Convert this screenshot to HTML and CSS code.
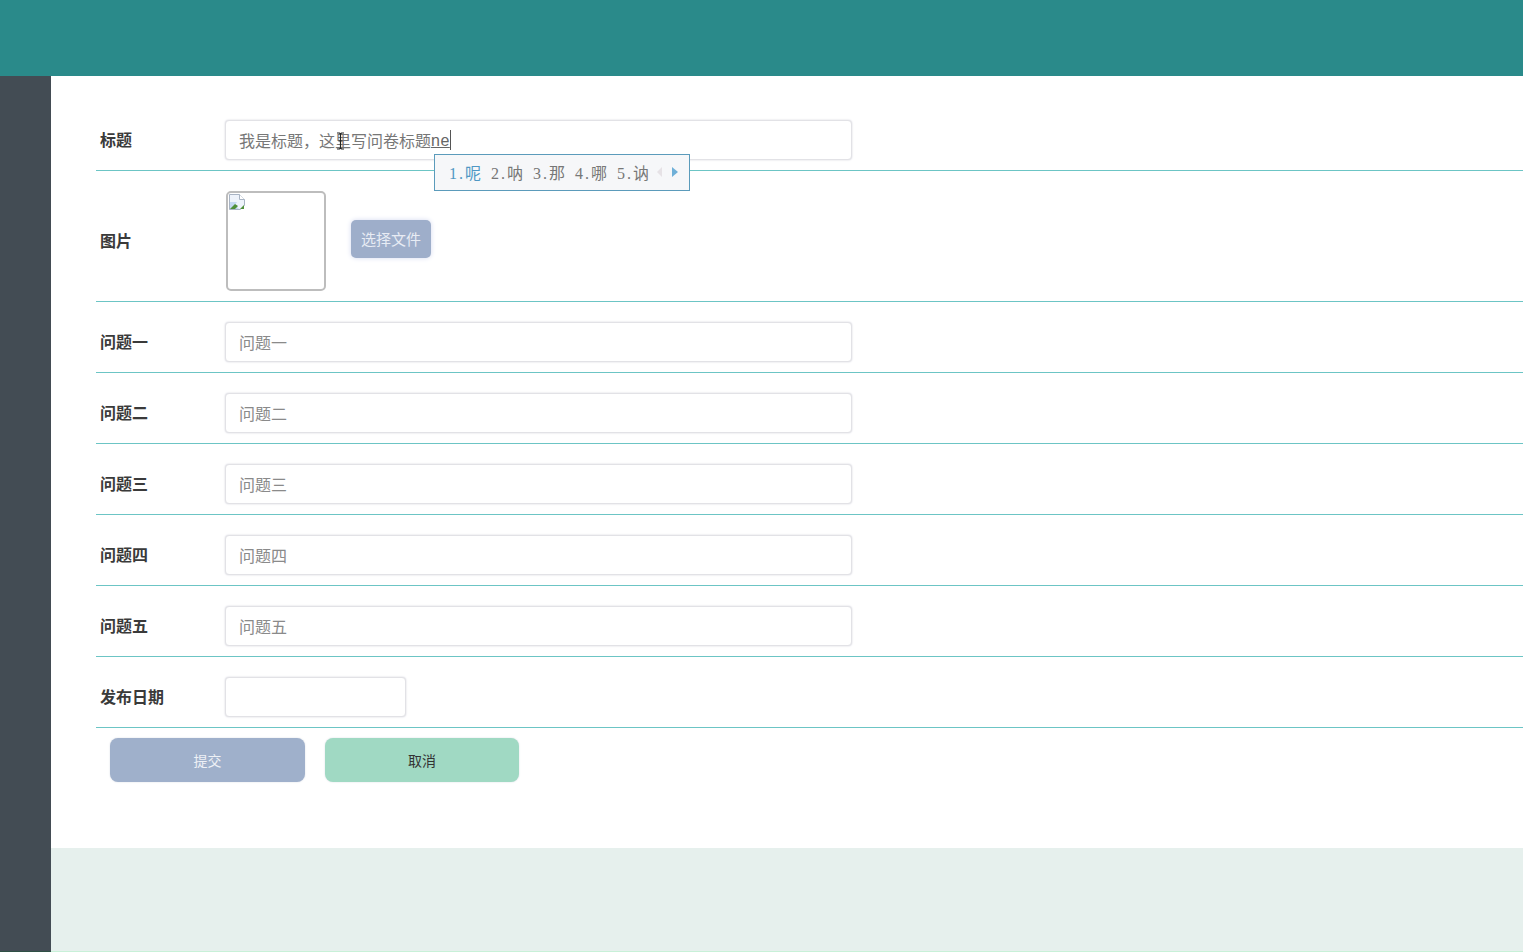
FILE: index.html
```html
<!DOCTYPE html>
<html lang="zh-CN">
<head>
    <meta charset="UTF-8">
    <meta name="viewport" content="width=device-width, initial-scale=1.0">
    <title>问卷</title>
    <link rel="stylesheet" href="styles.css">
</head>
<body>

    <div class="top-bar"></div>

    <div class="page">
        <div class="side-bar"></div>

        <div class="content">
            <form class="main-form">
                <div class="form-row">
                    <label class="row-label">标题</label>
                    <div class="title-field">
                        <span>我是标题，这里写问卷标题</span><span class="composing">ne</span><span class="caret"></span>
                        <svg class="ibeam" width="9" height="18" viewBox="0 0 9 18">
                            <path d="M1 1h2.5l1 1 1-1H8M4.500 2v14M1 17h2.5l1-1 1 1H8M2.500 9h4" fill="none" stroke="#222" stroke-width="1.2"/>
                        </svg>
                    </div>
                </div>

                <div class="form-row">
                    <label class="row-label">图片</label>
                    <div class="img-box">
                        <!-- broken image icon -->
                        <svg width="16" height="16" viewBox="0 0 16 16">
                            <path d="M.5.5h10l5 5v6l-4 4H.5z" fill="#eef3fb" stroke="#a9b4c4"/>
                            <path d="M10.500.5v5h5" fill="#fff" stroke="#a9b4c4"/>
                            <path d="M1 8h7l-2 3 4 4H1z" fill="#c5d8f3"/>
                            <path d="M1 15l5-5 3 2-3 3z" fill="#4f8f3a"/>
                            <path d="M11 15l4-4v4z" fill="#4f8f3a"/>
                        </svg>
                    </div>
                    <button type="button" class="file-btn">选择文件</button>
                </div>

                <div class="form-row">
                    <label class="row-label">问题一</label>
                    <input class="text-input" type="text" placeholder="问题一">
                </div>
                <div class="form-row">
                    <label class="row-label">问题二</label>
                    <input class="text-input" type="text" placeholder="问题二">
                </div>
                <div class="form-row">
                    <label class="row-label">问题三</label>
                    <input class="text-input" type="text" placeholder="问题三">
                </div>
                <div class="form-row">
                    <label class="row-label">问题四</label>
                    <input class="text-input" type="text" placeholder="问题四">
                </div>
                <div class="form-row">
                    <label class="row-label">问题五</label>
                    <input class="text-input" type="text" placeholder="问题五">
                </div>
                <div class="form-row">
                    <label class="row-label">发布日期</label>
                    <input class="text-input date-input" type="text">
                </div>

                <div class="btn-row">
                    <button type="button" class="big-btn submit-btn">提交</button>
                    <button type="button" class="big-btn cancel-btn">取消</button>
                </div>
            </form>

            <div class="footer"></div>
        </div>
    </div>

    <!-- input method popup -->
    <div class="ime-box">
        <span class="ime-item ime-active">1.呢</span>
        <span class="ime-item">2.呐</span>
        <span class="ime-item">3.那</span>
        <span class="ime-item">4.哪</span>
        <span class="ime-item">5.讷</span>
        <span class="ime-prev"></span>
        <span class="ime-next"></span>
    </div>

</body>
</html>
```

FILE: styles.css
```css
* {
    box-sizing: border-box;
}

body {
    margin: 0;
    height: 952px;
    overflow: hidden;
    font-family: "Liberation Sans", "Noto Sans CJK SC", sans-serif;
    color: #333;
    background: #fff;
}

.top-bar {
    height: 76px;
    background: #2a8a8a;
}

.page {
    display: flex;
    height: 876px;
}

.side-bar {
    width: 51px;
    background: #434c54;
    border-bottom: 1px solid #2f4f45;
}

.content {
    flex: 1;
    display: flex;
    flex-direction: column;
}

.main-form {
    height: 772px;
    padding: 24px 0 0 45px;
}

.form-row {
    display: flex;
    align-items: center;
    padding: 20px 0 10px 4px;
    border-bottom: 1px solid #6cc5c5;
}

.row-label {
    width: 125px;
    margin-bottom: 2px;
    font-size: 16px;
    font-weight: bold;
    color: #3a3a3a;
}

.text-input,
.title-field {
    width: 627px;
    height: 40px;
    padding: 3px 13px 0;
    font-family: inherit;
    font-size: 16px;
    color: #777;
    background: #fff;
    border: 1px solid #e2e2e6;
    border-radius: 4px;
    box-shadow: 0 0 2px #d0d0da;
}

.text-input::placeholder {
    color: #8a8a8a;
    opacity: 1;
}

.date-input {
    width: 181px;
}

.title-field {
    position: relative;
    display: flex;
    align-items: center;
    padding-top: 0;
}

.composing {
    padding-top: 1px;
    color: #666;
    text-decoration: underline;
    letter-spacing: 0.5px;
}

.caret {
    width: 1px;
    height: 20px;
    background: #555;
}

.ibeam {
    position: absolute;
    left: 110px;
    top: 11px;
}

.img-box {
    width: 100px;
    height: 100px;
    margin-left: 1px;
    padding: 1px;
    border: 2px solid #bdbdbd;
    border-radius: 5px;
    line-height: 0;
}

.file-btn {
    width: 80px;
    height: 38px;
    margin: 0 0 4px 25px;
    padding: 0 0 2px;
    font-family: inherit;
    font-size: 15px;
    color: #e8ecf4;
    background: #9eaeca;
    border: none;
    border-radius: 5px;
    box-shadow: 0 0 5px #d5daf0;
}

.btn-row {
    display: flex;
    gap: 20px;
    padding: 10px 0 0 14px;
}

.big-btn {
    width: 195px;
    height: 44px;
    padding: 0;
    font-family: inherit;
    font-size: 14px;
    border: none;
    border-radius: 8px;
    box-shadow: 0 0 2px #d8dce4;
}

.submit-btn {
    color: #eef1f6;
    background: #9fb0cb;
}

.cancel-btn {
    width: 194px;
    color: #333;
    background: #a0d9c3;
}

.footer {
    flex: 1;
    background: #e6f0ed;
    border-bottom: 1px solid #c8f0d8;
}

.ime-box {
    position: absolute;
    left: 434px;
    top: 154px;
    width: 256px;
    height: 37px;
    display: flex;
    align-items: center;
    padding: 0 0 2px 14px;
    font-family: "Liberation Serif", "Noto Sans CJK SC", serif;
    font-size: 16px;
    color: #777;
    background: #f6f7f9;
    border: 1px solid #5b9bbb;
}

.ime-active {
    color: #4f97c4;
}

.ime-item {
    flex: none;
    width: 42px;
    letter-spacing: 2px;
    white-space: nowrap;
}

.ime-prev,
.ime-next {
    flex: none;
    width: 0;
    height: 0;
    border-top: 5px solid transparent;
    border-bottom: 5px solid transparent;
}

.ime-prev {
    margin-left: -2px;
    border-right: 5px solid #e6e2e6;
}

.ime-next {
    margin-left: 10px;
    border-left: 6px solid #6fb0d8;
}
```
